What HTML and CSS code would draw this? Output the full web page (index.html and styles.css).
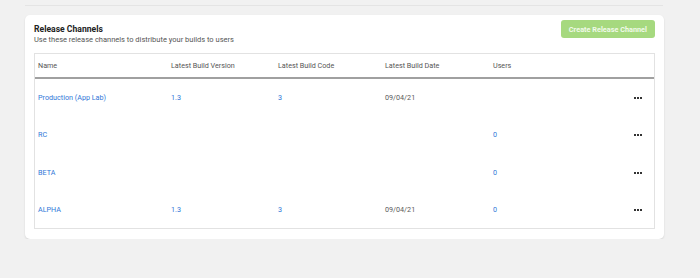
FILE: index.html
```html
<!DOCTYPE html>
<html lang="en">
<head>
    <meta charset="UTF-8">
    <title>Release Channels</title>
    <link rel="stylesheet" href="styles.css">
</head>
<body>
    <div class="top-rule"></div>
    <div class="card">
        <div class="card-head">
            <div>
                <h2 class="card-title">Release Channels</h2>
                <p class="card-sub">Use these release channels to distribute your builds to users</p>
            </div>
            <button class="create-btn" disabled>Create Release Channel</button>
        </div>
        <div class="table-box">
            <table class="channels">
                <thead>
                    <tr>
                        <th class="col-name">Name</th>
                        <th class="col-ver">Latest Build Version</th>
                        <th class="col-code">Latest Build Code</th>
                        <th class="col-date">Latest Build Date</th>
                        <th class="col-users">Users</th>
                        <th class="col-more"></th>
                    </tr>
                </thead>
                <tbody>
                    <tr>
                        <td><a href="#">Production (App Lab)</a></td>
                        <td><a href="#">1.3</a></td>
                        <td><a href="#">3</a></td>
                        <td>09/04/21</td>
                        <td></td>
                        <td class="more"><span class="dots"><i></i><i></i><i></i></span></td>
                    </tr>
                    <tr>
                        <td><a href="#">RC</a></td>
                        <td></td>
                        <td></td>
                        <td></td>
                        <td><a href="#">0</a></td>
                        <td class="more"><span class="dots"><i></i><i></i><i></i></span></td>
                    </tr>
                    <tr>
                        <td><a href="#">BETA</a></td>
                        <td></td>
                        <td></td>
                        <td></td>
                        <td><a href="#">0</a></td>
                        <td class="more"><span class="dots"><i></i><i></i><i></i></span></td>
                    </tr>
                    <tr>
                        <td><a href="#">ALPHA</a></td>
                        <td><a href="#">1.3</a></td>
                        <td><a href="#">3</a></td>
                        <td>09/04/21</td>
                        <td><a href="#">0</a></td>
                        <td class="more"><span class="dots"><i></i><i></i><i></i></span></td>
                    </tr>
                </tbody>
            </table>
        </div>
    </div>
</body>
</html>
```

FILE: styles.css
```css
body {
    margin: 0;
    background-color: #f1f1f1;
    font-family: Roboto, "Liberation Sans", sans-serif;
    color: #333;
}
.top-rule {
    margin: 0 37px 0 25px;
    height: 5px;
    border-bottom: 1px solid #e4e4e4;
}
.card {
    margin: 9px 36px 0 25px;
    padding: 5px 9px 10px 9px;
    background-color: white;
    border-radius: 5px;
    box-shadow: 0 1px 2px rgba(0, 0, 0, 0.12);
}
.card-head {
    display: flex;
    justify-content: space-between;
    align-items: flex-start;
}
.card-title {
    margin: 3px 0 0 0;
    font-size: 8.6px;
    font-weight: 700;
    color: #222;
    line-height: 12px;
}
.card-sub {
    margin: 0;
    font-size: 7.5px;
    color: #555;
    line-height: 10px;
}
.create-btn {
    height: 18px;
    padding: 0 8px;
    border: none;
    border-radius: 3px;
    background-color: #a6d97f;
    color: #f1f9ea;
    font-family: Roboto, "Liberation Sans", sans-serif;
    font-size: 7.3px;
    font-weight: 700;
}
.table-box {
    margin-top: 8px;
    border: 1px solid #e2e2e2;
}
.channels {
    width: 100%;
    table-layout: fixed;
    border-collapse: collapse;
    font-size: 7.2px;
}
.channels th {
    text-align: left;
    font-weight: 400;
    color: #555;
    height: 23px;
    padding: 0 0 0 3px;
    border-bottom: 2px solid #a0a0a0;
}
.channels td {
    height: 37.25px;
    padding: 0 0 0 3px;
    color: #5a5a5a;
}
.channels a {
    color: #2f78d8;
    text-decoration: none;
}
.col-name { width: 130px; }
.col-ver { width: 104px; }
.col-code { width: 104px; }
.col-date { width: 105px; }
.col-users { width: 97px; }
.more {
    text-align: right;
    padding-right: 12px !important;
}
.dots {
    display: inline-flex;
    gap: 1px;
    vertical-align: middle;
}
.dots i {
    width: 2px;
    height: 2px;
    background-color: #333;
}
```
